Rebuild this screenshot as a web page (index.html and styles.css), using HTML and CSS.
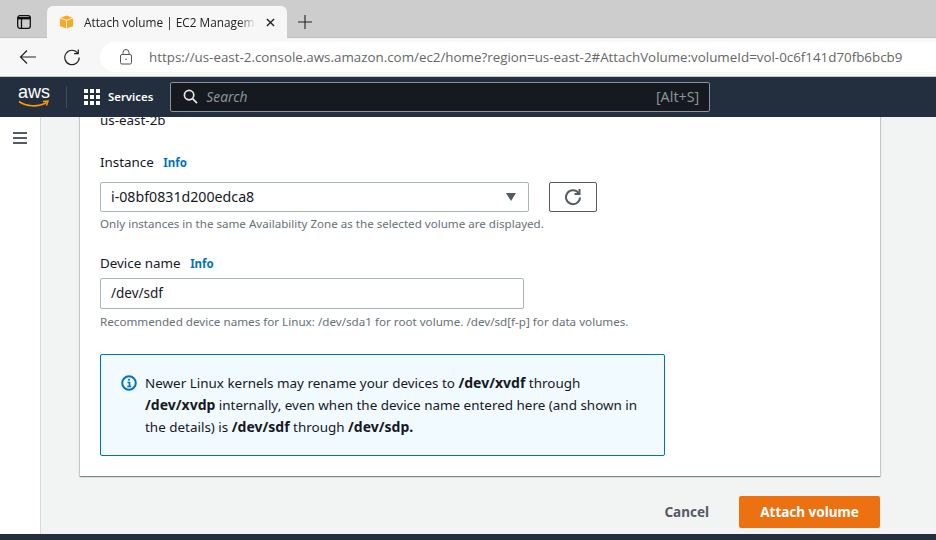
FILE: index.html
```html
<!DOCTYPE html>
<html lang="en">

<head>
    <meta charset="UTF-8">
    <meta name="viewport" content="width=device-width, initial-scale=1.0">
    <title>Attach volume | EC2 Management Console</title>
    <link rel="stylesheet" href="styles.css">
</head>

<body>
    <div class="tabstrip">
        <svg class="tabs-icon" width="14" height="14" viewBox="0 0 14 14" fill="none" stroke="#111" stroke-width="1.3">
            <rect x="0.700" y="0.700" width="12.600" height="12.600" rx="2.200" />
            <path d="M0.700 3.200h12.600" stroke-width="2.400" />
            <path d="M4.500 3.500v10" />
        </svg>
        <div class="tab">
            <svg class="favicon" width="15" height="16" viewBox="0 0 16 16">
                <path d="M1 3.600 8 1l7 2.600v8.800L8 15l-7-2.600z" fill="#f7a928" />
                <path d="M1 3.600 8 6.200l7-2.600M8 6.200V15" fill="none" stroke="#fff" stroke-width="0.900" />
            </svg>
            <span class="tab-title">Attach volume | EC2 Management Console</span>
            <svg class="tab-close" width="9" height="9" viewBox="0 0 10 10" stroke="#222" stroke-width="1.500">
                <path d="M1 1l8 8M9 1l-8 8" />
            </svg>
        </div>
        <svg class="new-tab" width="14" height="14" viewBox="0 0 14 14" stroke="#222" stroke-width="1.100">
            <path d="M7 0v14M0 7h14" />
        </svg>
    </div>

    <div class="toolbar">
        <svg class="back" width="18" height="16" viewBox="0 0 18 16" fill="none" stroke="#222" stroke-width="1.200">
            <path d="M1.500 8H17M8 1.500 1.500 8 8 14.500" />
        </svg>
        <svg class="reload" width="18" height="18" viewBox="0 0 18 18" fill="none" stroke="#222" stroke-width="1.200">
            <path d="M14.800 5.200A7.200 7.200 0 1 0 16.200 9.500" />
            <path d="M15.300 1.500v4.200h-4.200" />
        </svg>
        <div class="addressbar">
            <svg class="lock" width="12" height="16" viewBox="0 0 12 16" fill="none" stroke="#555" stroke-width="1">
                <rect x="0.500" y="5.500" width="11" height="9.500" rx="1.500" />
                <path d="M3 5.500V3.500a3 3 0 0 1 6 0v2" />
                <circle cx="6" cy="10.200" r="0.800" fill="#555" stroke="none" />
            </svg>
            <span class="url">https://us-east-2.console.aws.amazon.com/ec2/home?region=us-east-2#AttachVolume:volumeId=vol-0c6f141d70fb6bcb9</span>
        </div>
    </div>

    <header class="topnav">
        <div class="aws-logo">
            <span class="aws-text">aws</span>
            <svg width="32" height="9" viewBox="0 0 32 9" fill="none">
                <path d="M1 1.500C8 6.500 20 7.500 28.500 2.500" stroke="#ff9900" stroke-width="1.700" />
                <path d="M25 1.500l5-.5-1.500 4.500" stroke="#ff9900" stroke-width="1.500" />
            </svg>
        </div>
        <div class="nav-divider"></div>
        <div class="services">
            <div class="grid-icon">
                <i></i><i></i><i></i><i></i><i></i><i></i><i></i><i></i><i></i>
            </div>
            <span class="services-text">Services</span>
        </div>
        <div class="searchbox">
            <svg width="15" height="15" viewBox="0 0 16 16" fill="none" stroke="#e6e8e8" stroke-width="1.800">
                <circle cx="6.500" cy="6.500" r="5" />
                <path d="M10.200 10.200 15 15" />
            </svg>
            <span class="search-text">Search</span>
            <span class="search-key">[Alt+S]</span>
        </div>
    </header>

    <div class="layout">
        <aside class="sidebar">
            <div class="burger"><i></i><i></i><i></i></div>
        </aside>
        <main class="main">
            <section class="card">
                <div class="zone">us-east-2b</div>

                <div class="field field-instance">
                    <div class="label">Instance <a class="info">Info</a></div>
                    <div class="select-row">
                        <div class="select">
                            <span>i-08bf0831d200edca8</span>
                            <div class="caret"></div>
                        </div>
                        <button class="refresh" type="button">
                            <svg width="18" height="18" viewBox="0 0 18 18" fill="none" stroke="#545b64" stroke-width="2">
                                <path d="M14.600 5A7 7 0 1 0 16 9.500" />
                                <path d="M15.500 1v5h-5" />
                            </svg>
                        </button>
                    </div>
                    <div class="hint">Only instances in the same Availability Zone as the selected volume are displayed.</div>
                </div>

                <div class="field field-device">
                    <div class="label label-tight">Device name <a class="info">Info</a></div>
                    <div class="textbox">/dev/sdf</div>
                    <div class="hint hint-device">Recommended device names for Linux: /dev/sda1 for root volume. /dev/sd[f-p] for data volumes.</div>
                </div>

                <div class="alert">
                    <svg class="alert-icon" width="16" height="16" viewBox="0 0 16 16" fill="none">
                        <circle cx="8" cy="8" r="6.800" stroke="#0073bb" stroke-width="2" />
                        <path d="M8 3.800v2M6.500 7.500H8.500V11.500M6.200 11.500h4" stroke="#0073bb" stroke-width="1.700" />
                    </svg>
                    <p>Newer Linux kernels may rename your devices to <b>/dev/xvdf</b> through <b>/dev/xvdp</b> internally, even when the device name entered here (and shown in the details) is <b>/dev/sdf</b> through <b>/dev/sdp.</b></p>
                </div>
            </section>

            <div class="actions">
                <button class="btn-cancel" type="button">Cancel</button>
                <button class="btn-primary" type="button">Attach volume</button>
            </div>
        </main>
    </div>

    <div class="footerbar"></div>
</body>

</html>
```

FILE: styles.css
```css
* {
    box-sizing: border-box;
}

html,
body {
    height: 540px;
    overflow: hidden;
}

body {
    margin: 0;
    display: flex;
    flex-direction: column;
    font-family: "Noto Sans", Arial, sans-serif;
    color: #16191f;
    background-color: #f2f3f3;
}

/* browser chrome */
.tabstrip {
    height: 38px;
    flex: none;
    display: flex;
    align-items: flex-end;
    background-color: #cdcdcd;
    border-bottom: 1px solid #bfbfbf;
}

.tabs-icon {
    margin: 0 0 8px 17px;
}

.tab {
    width: 240px;
    height: 32px;
    margin-left: 16px;
    margin-bottom: -1px;
    padding: 0 12px;
    display: flex;
    align-items: center;
    background-color: #f7f7f7;
    border-radius: 6px 6px 0 0;
}

.favicon {
    flex: none;
    margin-right: 10px;
}

.tab-title {
    flex: 1;
    overflow: hidden;
    white-space: nowrap;
    font-family: "Open Sans", sans-serif;
    font-size: 11.800px;
    color: #222;
    -webkit-mask-image: linear-gradient(to right, #000 90%, transparent);
    mask-image: linear-gradient(to right, #000 90%, transparent);
}

.tab-close {
    flex: none;
    margin-left: 10px;
}

.new-tab {
    margin: 0 0 8px 11px;
}

.toolbar {
    height: 39px;
    flex: none;
    display: flex;
    align-items: center;
    background-color: #f7f7f7;
    border-bottom: 1px solid #c8c8c8;
}

.back {
    margin-left: 19px;
}

.reload {
    margin-left: 26px;
}

.addressbar {
    flex: 1;
    height: 30px;
    margin-left: 19px;
    padding-left: 20px;
    display: flex;
    align-items: center;
    background-color: #fff;
    border-radius: 15px 0 0 15px;
}

.url {
    margin-left: 17px;
    white-space: nowrap;
    font-family: "Open Sans", sans-serif;
    font-size: 13.370px;
    color: #666;
}

/* aws top bar */
.topnav {
    height: 40px;
    flex: none;
    display: flex;
    align-items: center;
    background-color: #232f3e;
    color: #fff;
}

.aws-logo {
    width: 32px;
    margin-left: 18px;
    display: flex;
    flex-direction: column;
    align-items: center;
}

.aws-text {
    height: 14px;
    font-family: "Liberation Sans", Arial, sans-serif;
    font-size: 18px;
    line-height: 12px;
}

.nav-divider {
    width: 1px;
    height: 22px;
    margin-left: 16px;
    background-color: #414b58;
}

.services {
    margin-left: 17px;
    display: flex;
    align-items: center;
    gap: 8px;
    font-size: 11.400px;
    font-weight: 600;
}

.services-text {
    margin-bottom: 2px;
}

.grid-icon {
    width: 16px;
    display: grid;
    grid-template-columns: repeat(3, 4px);
    gap: 2px;
}

.grid-icon i {
    height: 4px;
    background-color: #fff;
}

.searchbox {
    width: 540px;
    height: 30px;
    margin-left: 17px;
    padding: 0 10px 2px 12px;
    display: flex;
    align-items: center;
    background-color: #16191f;
    border: 1px solid #879596;
    border-radius: 2px;
}

.search-text {
    flex: 1;
    margin-left: 8px;
    font-style: italic;
    font-size: 13.800px;
    color: #879596;
}

.search-key {
    font-size: 14.300px;
    color: #879596;
}

/* page */
.layout {
    flex: 1;
    min-height: 0;
    display: flex;
}

.sidebar {
    width: 41px;
    flex: none;
    padding: 15px 0 0 13px;
    background-color: #fff;
    border-right: 1px solid #d5dbdb;
}

.burger {
    display: flex;
    flex-direction: column;
    gap: 3px;
    width: 14px;
}

.burger i {
    height: 2px;
    background-color: #545b64;
}

.main {
    flex: 1;
    min-width: 0;
    padding: 0 56px 0 39px;
    display: flex;
    flex-direction: column;
    justify-content: flex-end;
    overflow: hidden;
}

.card {
    flex: none;
    padding: 0 20px 20px;
    background-color: #fff;
    box-shadow: 0 1px 1px 0 rgba(0, 28, 36, 0.3), 1px 1px 1px 0 rgba(0, 28, 36, 0.15), -1px 1px 1px 0 rgba(0, 28, 36, 0.15);
}

.zone {
    font-size: 13.400px;
    line-height: 18px;
}

.field-instance {
    margin-top: 23px;
}

.field-device {
    margin-top: 20px;
}

.label {
    font-size: 13.400px;
    line-height: 20px;
    margin-bottom: 9px;
}

.label-tight {
    margin-bottom: 4px;
}

.info {
    margin-left: 6px;
    font-size: 11.500px;
    font-weight: 700;
    color: #0073bb;
}

.select-row {
    display: flex;
    gap: 20px;
}

.select {
    width: 429px;
    height: 30px;
    padding: 0 12px 2px 10px;
    display: flex;
    align-items: center;
    justify-content: space-between;
    font-size: 14.200px;
    border: 1px solid #aab7b8;
    border-radius: 2px;
}

.caret {
    width: 0;
    height: 0;
    margin-top: 2px;
    border-left: 5.500px solid transparent;
    border-right: 5.500px solid transparent;
    border-top: 8px solid #545b64;
}

.refresh {
    width: 48px;
    height: 30px;
    padding: 0;
    display: flex;
    align-items: center;
    justify-content: center;
    background-color: #fff;
    border: 1px solid #545b64;
    border-radius: 2px;
}

.hint {
    margin-top: 3px;
    font-size: 11.600px;
    line-height: 18px;
    color: #687078;
}

.hint-device {
    margin-top: 4px;
    font-size: 11.650px;
}

.textbox {
    width: 424px;
    height: 31px;
    padding: 0 10px 2px;
    display: flex;
    align-items: center;
    font-size: 13.500px;
    border: 1px solid #aab7b8;
    border-radius: 2px;
}

.alert {
    width: 565px;
    height: 102px;
    margin-top: 23px;
    padding: 10px 24px 10px 20px;
    display: flex;
    gap: 8px;
    background-color: #f1faff;
    border: 1px solid #0073bb;
    border-radius: 2px;
}

.alert-icon {
    flex: none;
    margin-top: 10px;
}

.alert p {
    margin: 0;
    padding-top: 7px;
    font-size: 13.450px;
    line-height: 22px;
}

.alert b {
    font-size: 14px;
}

.actions {
    flex: none;
    height: 58px;
    padding-top: 20px;
    display: flex;
    align-items: flex-start;
    justify-content: flex-end;
    gap: 30px;
}

.btn-cancel,
.btn-primary {
    font-family: "Noto Sans", Arial, sans-serif;
    font-size: 13.500px;
    font-weight: 700;
    border: none;
    border-radius: 2px;
}

.btn-cancel {
    height: 32px;
    padding: 0;
    background: none;
    color: #545b64;
}

.btn-primary {
    width: 141px;
    height: 32px;
    background-color: #ec7211;
    color: #fff;
}

.footerbar {
    height: 6px;
    flex: none;
    background-color: #232f3e;
}
```
